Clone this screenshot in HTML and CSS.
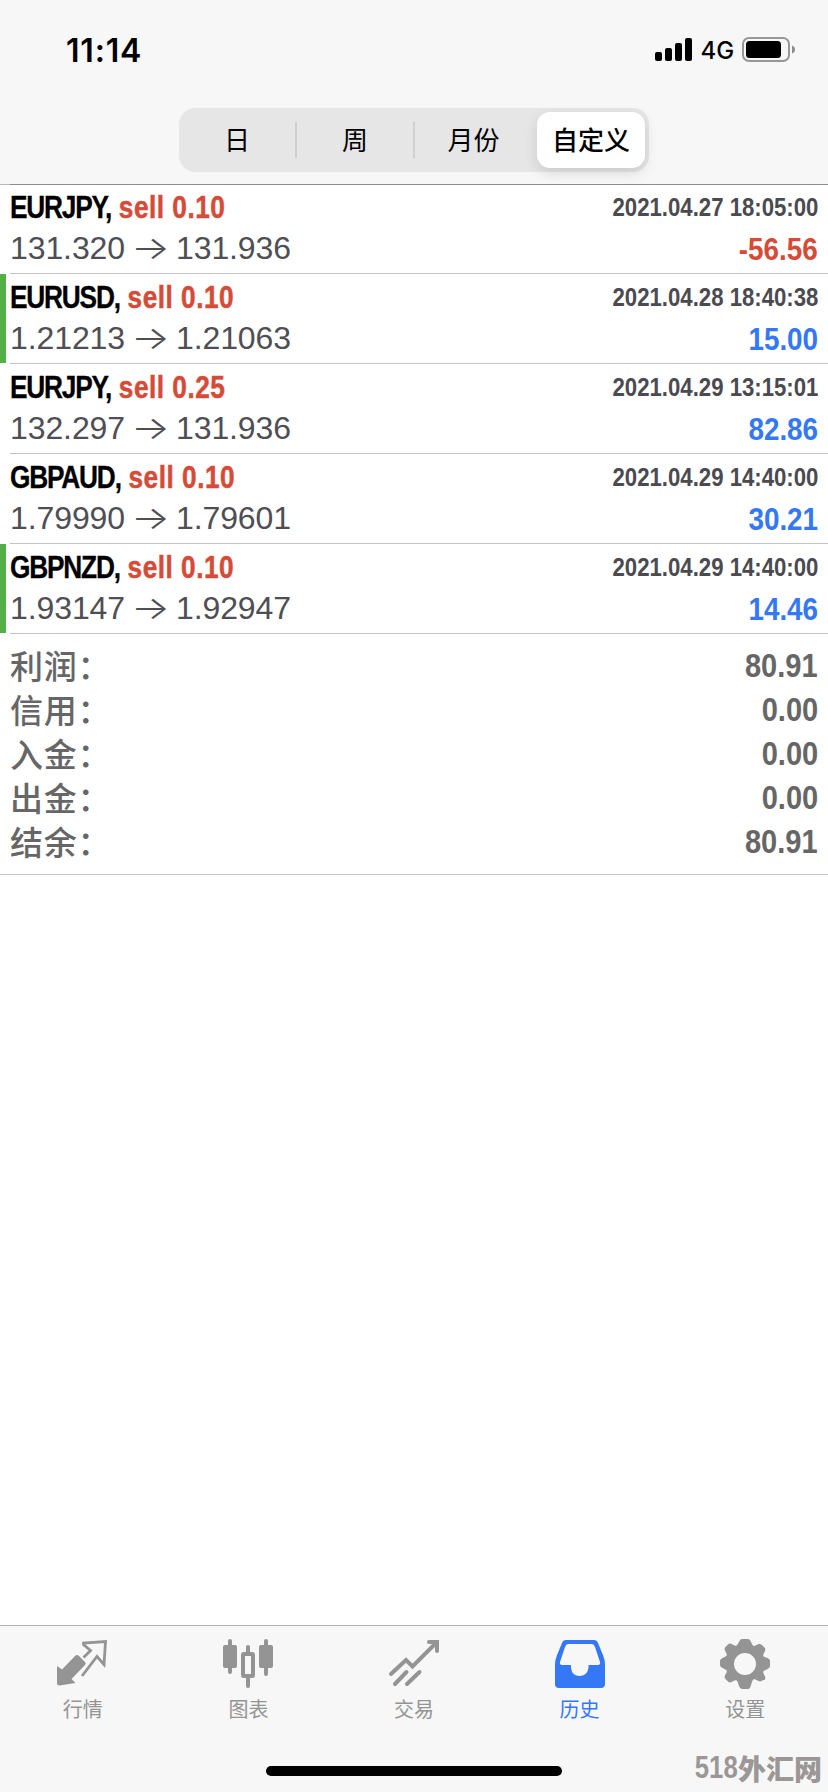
FILE: index.html
```html
<!DOCTYPE html>
<html lang="zh-CN">
<head>
<meta charset="utf-8">
<title>历史</title>
<link rel="stylesheet" href="styles.css">
</head>
<body>
<div class="screen">
  <header class="header">
    <div class="status">
      <span class="time">11:14</span>
      <div class="status-right">
        <svg class="signal" width="38" height="24" viewBox="0 0 38 24"><rect x="0" y="14" width="7" height="9" rx="2"/><rect x="10" y="10" width="7" height="13" rx="2"/><rect x="20" y="5" width="7" height="18" rx="2"/><rect x="30" y="0" width="7" height="23" rx="2"/></svg>
        <span class="network">4G</span>
        <svg class="battery" width="54" height="26" viewBox="0 0 54 26"><rect x="1" y="1" width="46" height="23" rx="6" fill="none" stroke="#979797" stroke-width="2"/><rect x="4" y="4" width="35" height="17" rx="3.5"/><path d="M50 8.5q3 1 3 4t-3 4z" fill="#8d8d8d"/></svg>
      </div>
    </div>
    <nav class="segments">
      <span class="segment">日</span>
      <span class="segment divided">周</span>
      <span class="segment divided">月份</span>
      <span class="segment selected">自定义</span>
    </nav>
  </header>

  <main class="history">
    <article class="deal">
      <div class="line"><div class="title"><span class="symbol">EURJPY,</span><span class="side">sell 0.10</span></div><span class="date">2021.04.27 18:05:00</span></div>
      <div class="line"><div class="price"><span>131.320</span><span class="arrow">→</span><span>131.936</span></div><span class="profit loss">-56.56</span></div>
    </article>
    <article class="deal closed">
      <div class="line"><div class="title"><span class="symbol">EURUSD,</span><span class="side">sell 0.10</span></div><span class="date">2021.04.28 18:40:38</span></div>
      <div class="line"><div class="price"><span>1.21213</span><span class="arrow">→</span><span>1.21063</span></div><span class="profit">15.00</span></div>
    </article>
    <article class="deal">
      <div class="line"><div class="title"><span class="symbol">EURJPY,</span><span class="side">sell 0.25</span></div><span class="date">2021.04.29 13:15:01</span></div>
      <div class="line"><div class="price"><span>132.297</span><span class="arrow">→</span><span>131.936</span></div><span class="profit">82.86</span></div>
    </article>
    <article class="deal">
      <div class="line"><div class="title"><span class="symbol">GBPAUD,</span><span class="side">sell 0.10</span></div><span class="date">2021.04.29 14:40:00</span></div>
      <div class="line"><div class="price"><span>1.79990</span><span class="arrow">→</span><span>1.79601</span></div><span class="profit">30.21</span></div>
    </article>
    <article class="deal closed">
      <div class="line"><div class="title"><span class="symbol">GBPNZD,</span><span class="side">sell 0.10</span></div><span class="date">2021.04.29 14:40:00</span></div>
      <div class="line"><div class="price"><span>1.93147</span><span class="arrow">→</span><span>1.92947</span></div><span class="profit">14.46</span></div>
    </article>
    <section class="summary">
      <div class="total"><span class="label">利润：</span><span class="amount">80.91</span></div>
      <div class="total"><span class="label">信用：</span><span class="amount">0.00</span></div>
      <div class="total"><span class="label">入金：</span><span class="amount">0.00</span></div>
      <div class="total"><span class="label">出金：</span><span class="amount">0.00</span></div>
      <div class="total"><span class="label">结余：</span><span class="amount">80.91</span></div>
    </section>
  </main>

  <footer class="footer">
    <nav class="tabs">
      <div class="tab">
        <svg width="52" height="52" viewBox="0 0 52 52"><path d="M0 28L5 31.500 18 18q2-2 4 0l6 6q1.500 1.500 0 3L14.500 41l4 4-16 2.500Q0 47.500 0 45z"/><path d="M26.500 19.500l7-7-7-6V5L48.500 3.500l-1.500 23-7-8L25 38" fill="none" stroke="currentColor" stroke-width="2.8"/></svg>
        <span>行情</span>
      </div>
      <div class="tab">
        <svg width="52" height="52" viewBox="0 0 52 52"><rect x="1" y="7" width="14" height="23" rx="2"/><rect x="37" y="7" width="14" height="23" rx="2"/><path d="M8 3v31M44 3v33M26 9v7M26 40v8" fill="none" stroke="currentColor" stroke-width="4" stroke-linecap="round"/><rect x="21" y="16" width="10" height="22" rx="1" fill="none" stroke="currentColor" stroke-width="4"/></svg>
        <span>图表</span>
      </div>
      <div class="tab">
        <svg width="52" height="52" viewBox="0 0 52 52"><path d="M3 36L18 22l6.500 6.500L48 5M41 4h8v9M7 46l11.500-12M19 46l12.500-12" fill="none" stroke="currentColor" stroke-width="4" stroke-linecap="round"/></svg>
        <span>交易</span>
      </div>
      <div class="tab active">
        <svg width="52" height="52" viewBox="0 0 52 52"><path fill-rule="evenodd" d="M12 2h28q3 0 4 3l5 12q2 5 2 9v20q0 4-4 4H5q-4 0-4-4V26q0-4 2-9L8 5q1-3 4-3zM14 6q-2 0-3 3L6 24q-.5 3 2 3h9v3q1 8 8.500 8T34.500 30v-3H44q2.500 0 2-3L41 9q-1-3-3-3z"/></svg>
        <span>历史</span>
      </div>
      <div class="tab">
        <svg width="52" height="52" viewBox="0 0 52 52"><path fill-rule="evenodd" d="M23 1h6q2 0 3 3l1.500 3q1 1.500 3 .5l3-1.500q2-.5 3.500 1l2.500 2.500q1.500 1.500 .5 3.500l-1.500 3q-1 2 1 3l3 1q2.500 1 2.500 3v5q0 2-2.500 3l-3 1.500q-2 1-1 3l1.500 3q1 2-.5 3.500L43 42.500q-1.500 1.500-3.500 .5l-3-1.500q-2-1-3 1L32 47q-1 4-3 4h-6q-2 0-3-3l-1.500-4.500q-1-2-3-1L12.500 44q-2 1-3.500-.5L6.500 41Q5 39.500 6 37.500l1.500-3q1-2-1-3l-3-1.500Q1 29 1 27v-4q0-2 2.500-3l3-1.500q2-1 1-3L6 12.500Q5 10.500 6.500 9L9 6.500Q10.500 5 12.500 6l3 1.500q2 1 3-1L20 4q1-3 3-3zM26 15a11 11 0 1 0 0 22 11 11 0 1 0 0-22z"/></svg>
        <span>设置</span>
      </div>
    </nav>
    <div class="home-indicator"></div>
    <div class="watermark"><span class="watermark-number">518</span><span>外汇网</span></div>
  </footer>
</div>
</body>
</html>
```
FILE: styles.css
```css
* { box-sizing: border-box; }
body {
  margin: 0;
  background: #fff;
  color: #000;
  font-family: "Liberation Sans", "Noto Sans CJK SC", sans-serif;
}
.screen { width: 828px; height: 1792px; display: flex; flex-direction: column; overflow: hidden; }

.header {
  height: 185px;
  flex: none;
  padding-top: 28px;
  background: linear-gradient(#8c8c8c, #8c8c8c) 10px 184px no-repeat, linear-gradient(#b8b8b8, #b8b8b8) 0 184px no-repeat, #f7f7f7;
  background-size: 818px 1px, 10px 1px, auto;
}
.status { height: 44px; padding: 0 32px 0 66px; display: flex; justify-content: space-between; align-items: center; }
.time { font: 600 32px/44px Inter, sans-serif; letter-spacing: .8px; padding-top: 1px; }
.status-right { display: flex; align-items: center; gap: 8px; }
.network { font: 500 24px/40px Inter, sans-serif; letter-spacing: -.1px; padding-top: 2px; margin-left: -1px; }
.signal, .battery { flex: none; display: block; }
.signal { margin-right: 1px; }

.segments {
  width: 470px;
  height: 64px;
  margin: 36px 0 0 179px;
  padding: 4px;
  border-radius: 16px;
  background: #e6e6e6;
  display: grid;
  grid-template-columns: 112px 118px 124px 108px;
}
.segment { display: flex; justify-content: center; align-items: center; padding-bottom: 2px; font-size: 26px; line-height: 36px; font-family: "Noto Sans CJK SC", sans-serif; }
.segment:first-child { padding-right: 4px; }
.divided { background: linear-gradient(#cfcfd1, #cfcfd1) 0 10px / 2px 36px no-repeat; padding-left: 2px; }
.divided:nth-child(3) { padding-right: 5px; }
.selected { background: #fff; border-radius: 13px; font-weight: 500; box-shadow: 0 5px 14px rgba(0, 0, 0, .12); }

.history { flex: 1; margin-top: -1px; }
.deal {
  height: 90px;
  padding: 1px 10px 0;
  background: linear-gradient(#c4c4c6, #c4c4c6) 10px 89px / 818px 1px no-repeat;
}
.closed {
  background:
    linear-gradient(#c4c4c6, #c4c4c6) 10px 89px / 818px 1px no-repeat,
    linear-gradient(#52b046, #52b046) 0 0 / 6px 89px no-repeat;
}
.line { display: flex; justify-content: space-between; white-space: nowrap; }
.line:first-child { height: 43px; }
.title, .date, .profit, .amount { font-weight: 700; }
.title { font-size: 32px; line-height: 44px; transform: scaleX(.82); transform-origin: 0 50%; }
.symbol { letter-spacing: -1.45px; margin-right: 9.5px; -webkit-text-stroke: .3px #000; }
.side { color: #d54b37; letter-spacing: .6px; -webkit-text-stroke: .5px #d54b37; }
.date { font-size: 26px; line-height: 44px; color: #4a4a50; transform: scaleX(.853); transform-origin: 100% 50%; }
.price { display: flex; font-size: 32px; line-height: 40px; color: #4f4e54; letter-spacing: -.1px; }
.arrow { width: 51px; text-align: center; font-family: Inter, sans-serif; font-weight: 300; transform: scaleX(1.28); }
.profit { font-size: 32px; line-height: 43px; color: #3478f6; transform: scaleX(.87); transform-origin: 100% 50%; }
.loss { color: #d54b37; }

.summary { height: 241px; padding: 10px 10px 0; border-bottom: 1px solid #c4c4c6; }
.total { height: 44px; display: flex; justify-content: space-between; align-items: center; color: #666; line-height: 44px; }
.label { font-family: "Noto Sans CJK SC", sans-serif; font-weight: 500; font-size: 33px; letter-spacing: .8px; padding-bottom: 3px; }
.amount { font-size: 33px; transform: scaleX(.88); transform-origin: 100% 50%; }

.footer { position: relative; height: 167px; flex: none; border-top: 1px solid #b2b2b2; background: #f7f7f7; }
.tabs { display: grid; grid-template-columns: repeat(5, 1fr); padding-top: 12px; }
.tab { display: flex; flex-direction: column; align-items: center; color: #949494; font-family: "Noto Sans CJK SC", sans-serif; font-size: 20px; line-height: 30px; }
.tab svg { display: block; fill: currentColor; margin-bottom: 4px; }
.active { color: #3478f6; }
.home-indicator { width: 296px; height: 10px; margin: 42px auto 0; border-radius: 5px; background: #000; }
.watermark {
  position: absolute;
  right: 6px;
  bottom: 3px;
  display: flex;
  color: #9b9796;
  font: 900 28px/42px "Noto Sans CJK SC", sans-serif;
}
.watermark-number { font-family: "Liberation Sans", sans-serif; font-size: 31px; transform: scaleX(.83); transform-origin: 100% 50%; }
```
